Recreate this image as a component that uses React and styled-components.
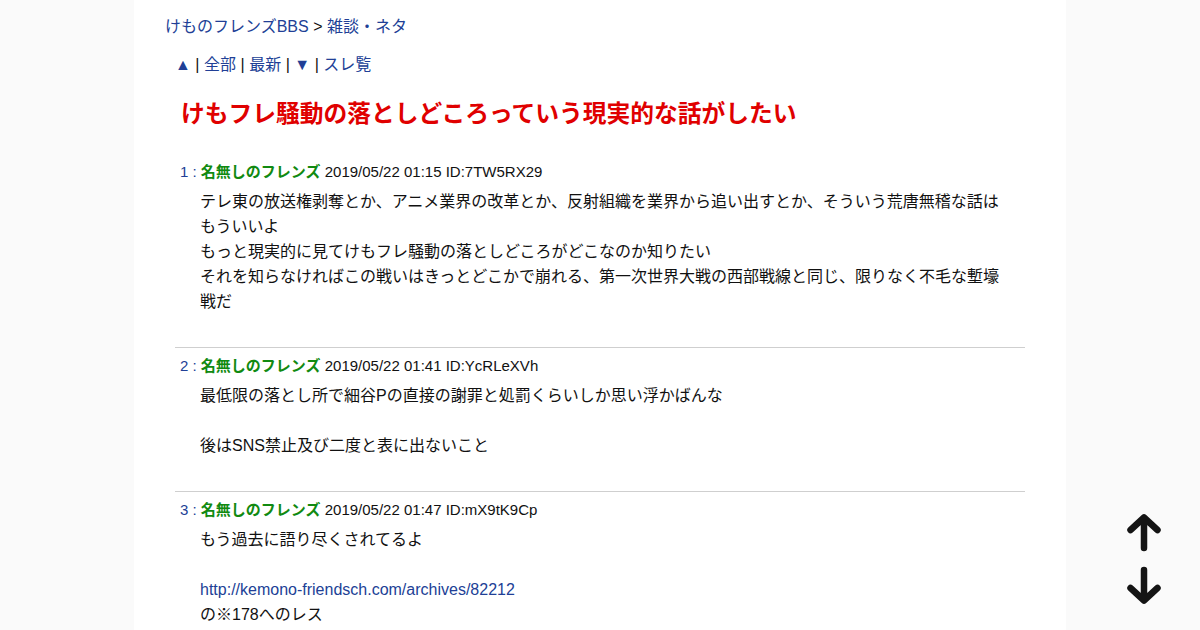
import React from "react";
import styled, { createGlobalStyle } from "styled-components";

const Global = createGlobalStyle`
  html, body { margin: 0; padding: 0; }
  body {
    background: #fafafa;
    font-family: "Liberation Sans", "Noto Sans CJK JP", sans-serif;
    color: #111;
  }
`;

const Page = styled.div`
  width: 932px;
  min-height: 100vh;
  margin: 0 auto;
  background: #fff;
  box-sizing: border-box;
  padding: 15px 0 0 31px;
`;

const Link = styled.a`
  color: #213f96;
  text-decoration: none;
`;

const Breadcrumb = styled.div`
  font-size: 16px;
  line-height: 24px;
`;

const Nav = styled.div`
  margin-top: 14px;
  padding-left: 10px;
  font-size: 16px;
  line-height: 24px;
`;

const Sep = styled.span`
  margin: 0 4.5px;
`;

const Title = styled.h1`
  margin: 21px 0 0 16px;
  font-size: 23.75px;
  line-height: 32px;
  font-weight: bold;
  color: #e00000;
`;

const Posts = styled.div`
  margin: 24px 0 0 10px;
  width: 850px;
`;

const Post = styled.div`
  padding: 7px 0 33px;
  border-bottom: ${(p) => (p.$last ? "none" : "1px solid #cfcfcf")};
`;

const Header = styled.div`
  padding-left: 5px;
  font-size: 15px;
  line-height: 22px;
  white-space: nowrap;
`;

const Num = styled.span`
  color: #213f96;
`;

const Name = styled.b`
  color: #118a11;
`;

const Body = styled.div`
  margin: 6px 0 0 25px;
  width: 808px;
  font-size: 16px;
  line-height: 25px;
`;

const Arrows = styled.div`
  position: fixed;
  right: 38px;
  bottom: 25px;
  display: flex;
  flex-direction: column;
  gap: 12px;
`;

const ArrowBtn = styled.svg`
  display: block;
  width: 36px;
  height: 40px;
`;

const posts = [
  {
    n: 1,
    date: "2019/05/22 01:15 ID:7TW5RX29",
    body: (
      <>
        テレ東の放送権剥奪とか、アニメ業界の改革とか、反射組織を業界から追い出すとか、そういう荒唐無稽な話はもういいよ
        <br />
        もっと現実的に見てけもフレ騒動の落としどころがどこなのか知りたい
        <br />
        それを知らなければこの戦いはきっとどこかで崩れる、第一次世界大戦の西部戦線と同じ、限りなく不毛な塹壕戦だ
      </>
    ),
  },
  {
    n: 2,
    date: "2019/05/22 01:41 ID:YcRLeXVh",
    body: (
      <>
        最低限の落とし所で細谷Pの直接の謝罪と処罰くらいしか思い浮かばんな
        <br />
        <br />
        後はSNS禁止及び二度と表に出ないこと
      </>
    ),
  },
  {
    n: 3,
    date: "2019/05/22 01:47 ID:mX9tK9Cp",
    body: (
      <>
        もう過去に語り尽くされてるよ
        <br />
        <br />
        <Link href="#">http://kemono-friendsch.com/archives/82212</Link>
        <br />
        の※178へのレス
      </>
    ),
  },
];

export default function App() {
  return (
    <>
      <Global />
      <Page>
        <Breadcrumb>
          <Link href="#">けものフレンズBBS</Link> &gt; <Link href="#">雑談・ネタ</Link>
        </Breadcrumb>
        <Nav>
          <Link href="#">▲</Link>
          <Sep>|</Sep>
          <Link href="#">全部</Link>
          <Sep>|</Sep>
          <Link href="#">最新</Link>
          <Sep>|</Sep>
          <Link href="#">▼</Link>
          <Sep>|</Sep>
          <Link href="#">スレ覧</Link>
        </Nav>
        <Title>けもフレ騒動の落としどころっていう現実的な話がしたい</Title>
        <Posts>
          {posts.map((p, i) => (
            <Post key={p.n} $last={i === posts.length - 1}>
              <Header>
                <Num>{p.n} : </Num>
                <Name>名無しのフレンズ</Name> {p.date}
              </Header>
              <Body>{p.body}</Body>
            </Post>
          ))}
        </Posts>
      </Page>
      <Arrows>
        <ArrowBtn viewBox="0 0 36 40">
          <path
            d="M18 6 V35 M4.5 17 L18 4.5 L31.5 17"
            fill="none"
            stroke="#141414"
            strokeWidth="6.5"
            strokeLinecap="round"
            strokeLinejoin="round"
          />
        </ArrowBtn>
        <ArrowBtn viewBox="0 0 36 40">
          <path
            d="M18 5 V34 M4.5 23 L18 35.5 L31.5 23"
            fill="none"
            stroke="#141414"
            strokeWidth="6.5"
            strokeLinecap="round"
            strokeLinejoin="round"
          />
        </ArrowBtn>
      </Arrows>
    </>
  );
}
